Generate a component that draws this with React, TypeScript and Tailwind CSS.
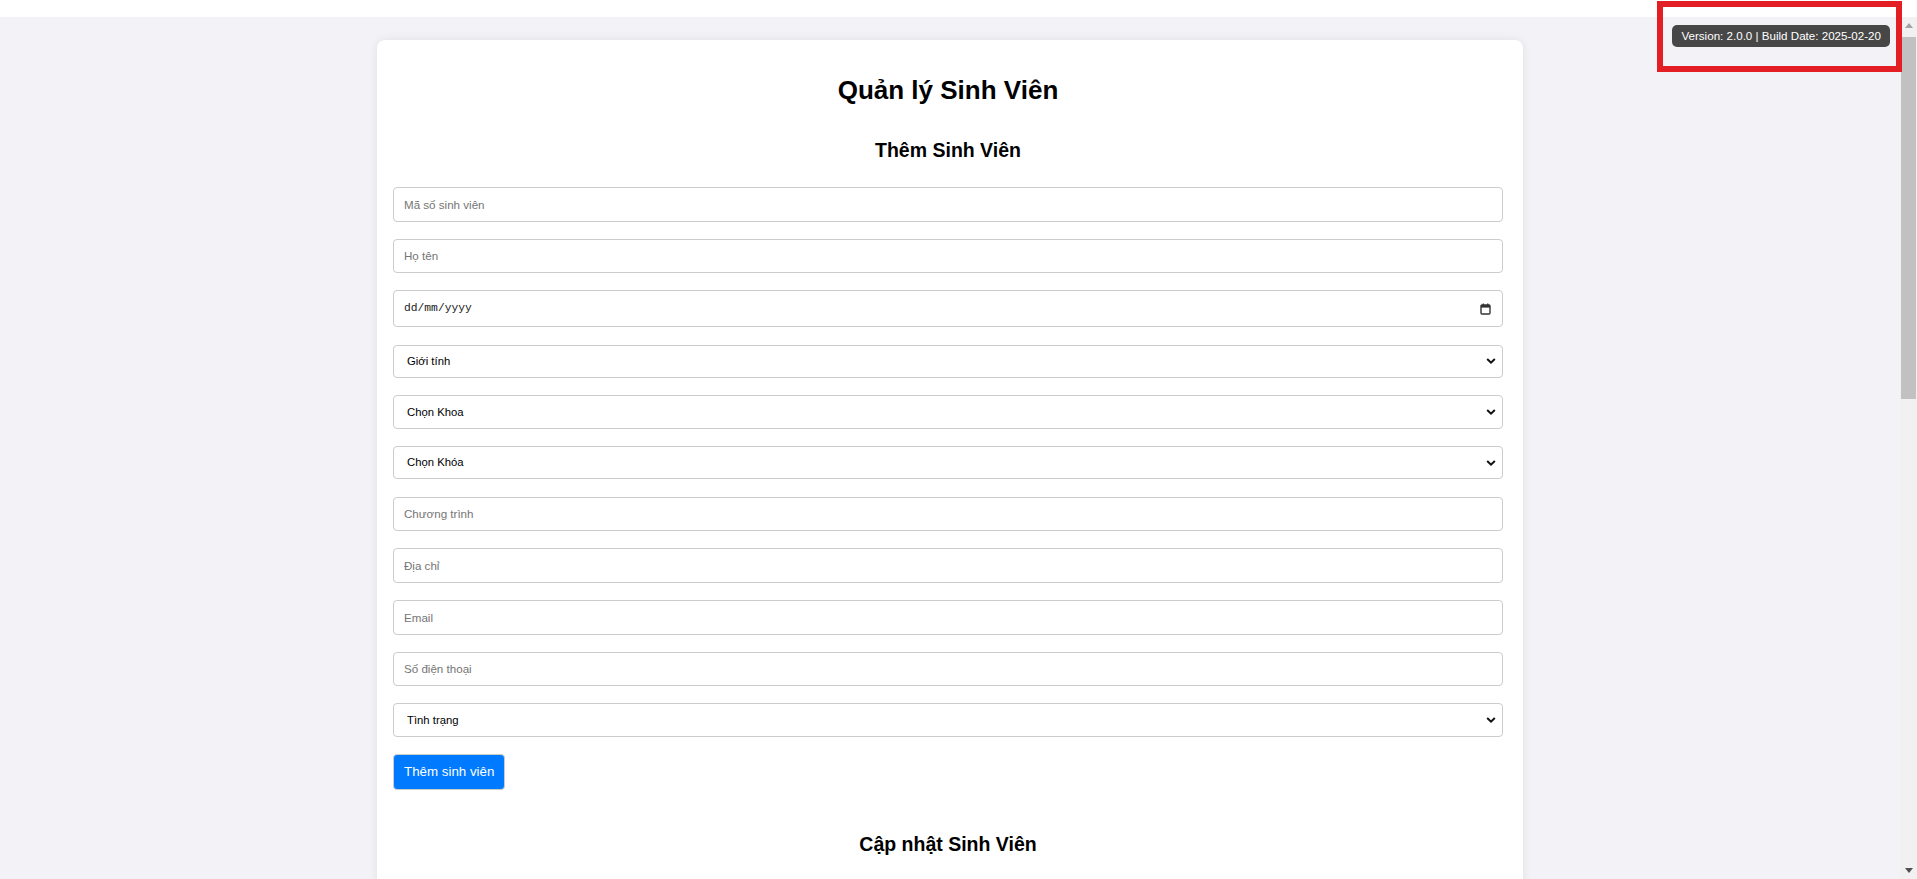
const fontSans = "font-['Liberation_Sans',Arial,sans-serif]";

const TextField = ({ placeholder }: { placeholder: string }) => (
  <input
    type="text"
    placeholder={placeholder}
    className="h-[34.5px] w-full rounded border border-[#cccccc] bg-white px-[10px] text-[11.6px] text-black placeholder:text-[#757575] outline-none"
  />
);

const SelectField = ({ label }: { label: string }) => (
  <div className="relative">
    <select className="h-[33.5px] w-full appearance-none rounded border border-[#cccccc] bg-white pl-[13px] text-[11.3px] text-black outline-none">
      <option>{label}</option>
    </select>
    <svg
      className="pointer-events-none absolute right-[7px] top-1/2 -translate-y-1/2"
      width="10"
      height="7"
      viewBox="0 0 10 7"
    >
      <path d="M1.2 1.5 L5 5.2 L8.8 1.5" fill="none" stroke="#111" strokeWidth="2" />
    </svg>
  </div>
);

const DateField = () => (
  <div className="flex h-[37px] w-full items-center justify-between rounded border border-[#cccccc] bg-white pl-[10px] pr-[11px]">
    <span className="font-['Liberation_Mono',monospace] text-[11.3px] text-[#1a1a1a]">dd/mm/yyyy</span>
    <svg width="11" height="12" viewBox="0 0 11 12">
      <rect x="1" y="2" width="9" height="9" rx="1" fill="none" stroke="#333" strokeWidth="1.4" />
      <rect x="1" y="2" width="9" height="2.6" fill="#333" />
      <rect x="2.6" y="0.5" width="1.3" height="2" fill="#333" />
      <rect x="7.1" y="0.5" width="1.3" height="2" fill="#333" />
    </svg>
  </div>
);

const Scrollbar = () => (
  <div className="flex w-[17px] shrink-0 flex-col bg-[#f1f1f1]">
    <div className="flex h-[17px] items-center justify-center">
      <svg width="8" height="5" viewBox="0 0 8 5">
        <path d="M0 5 L4 0 L8 5 Z" fill="#a3a3a3" />
      </svg>
    </div>
    <div className="mx-[1px] mt-[3px] h-[362px] bg-[#c1c1c1]" />
    <div className="flex-1" />
    <div className="flex h-[17px] items-center justify-center">
      <svg width="8" height="5" viewBox="0 0 8 5">
        <path d="M0 0 L8 0 L4 5 Z" fill="#505050" />
      </svg>
    </div>
  </div>
);

export default function App() {
  return (
    <div className={`relative flex h-screen w-full flex-col overflow-hidden bg-white ${fontSans}`}>
      <div className="h-[17px] shrink-0 bg-white" />
      <div className="flex min-h-0 flex-1">
        <main className="relative min-w-0 flex-1 overflow-hidden bg-[#f2f2f7]">
          <div className="absolute right-[10px] top-[8px] rounded-[5px] bg-[#474747] px-[9px] py-[4px] text-[11.6px] leading-[14px] text-white">
            Version: 2.0.0 | Build Date: 2025-02-20
          </div>
          <div className="mx-auto mt-[23px] w-[1146px] rounded-lg bg-white pb-[120px] pl-[16px] pr-[20px] pt-[35px] shadow-[0_0_10px_rgba(0,0,0,0.08)]">
            <h1 className="h-[30px] text-center text-[26px] font-bold leading-[30px] text-black">
              Quản lý Sinh Viên
            </h1>
            <h2 className="mt-[33px] h-[24px] text-center text-[19.5px] font-bold leading-[24px] text-black">
              Thêm Sinh Viên
            </h2>
            <div className="mt-[25px] flex flex-col gap-[17.2px]">
              <TextField placeholder="Mã số sinh viên" />
              <TextField placeholder="Họ tên" />
              <DateField />
              <SelectField label="Giới tính" />
              <SelectField label="Chọn Khoa" />
              <SelectField label="Chọn Khóa" />
              <TextField placeholder="Chương trình" />
              <TextField placeholder="Địa chỉ" />
              <TextField placeholder="Email" />
              <TextField placeholder="Số điện thoại" />
              <SelectField label="Tình trạng" />
              <button className="h-[36px] w-fit rounded border border-[#cccccc] bg-[#007bff] px-[10px] text-[13.33px] text-white">
                Thêm sinh viên
              </button>
            </div>
            <h2 className="mt-[41.5px] h-[24px] text-center text-[19.5px] font-bold leading-[24px] text-black">
              Cập nhật Sinh Viên
            </h2>
          </div>
        </main>
        <Scrollbar />
      </div>
      <div className="pointer-events-none absolute left-[1657px] top-[1px] h-[71px] w-[245px] border-[6px] border-[#e31e24]" />
    </div>
  );
}
